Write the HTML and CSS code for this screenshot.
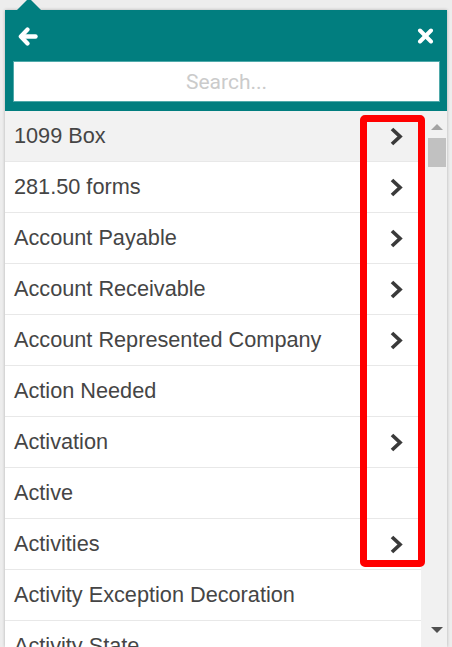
FILE: index.html
```html
<!DOCTYPE html>
<html>
<head>
<meta charset="utf-8">
<link rel="stylesheet" href="styles.css">
</head>
<body>
<div class="popup">
  <div class="header">
    <div class="icon-row">
      <svg class="icon-back" width="20" height="19" viewBox="0 0 20 19">
        <polyline points="9.5,2.5 2.8,9.5 9.5,16.5" fill="none" stroke="#fff" stroke-width="4.2" stroke-linecap="round" stroke-linejoin="round"/>
        <line x1="4" y1="9.5" x2="17.5" y2="9.5" stroke="#fff" stroke-width="4.4" stroke-linecap="round"/>
      </svg>
      <svg class="icon-close" width="17" height="16" viewBox="0 0 17 16">
        <line x1="3" y1="2.5" x2="14" y2="13.5" stroke="#fff" stroke-width="4" stroke-linecap="round"/>
        <line x1="14" y1="2.5" x2="3" y2="13.5" stroke="#fff" stroke-width="4" stroke-linecap="round"/>
      </svg>
    </div>
    <input class="search" type="text" placeholder="Search...">
  </div>
  <div class="body">
    <ul class="list">
      <li class="row hover"><span>1099 Box</span><svg class="chev" width="15" height="19" viewBox="0 0 15 19"><polyline points="3,2 11,9.5 3,17" fill="none" stroke="#3a3a3a" stroke-width="3.7" stroke-linejoin="miter"/></svg></li>
      <li class="row"><span>281.50 forms</span><svg class="chev" width="15" height="19" viewBox="0 0 15 19"><polyline points="3,2 11,9.5 3,17" fill="none" stroke="#3a3a3a" stroke-width="3.7" stroke-linejoin="miter"/></svg></li>
      <li class="row"><span>Account Payable</span><svg class="chev" width="15" height="19" viewBox="0 0 15 19"><polyline points="3,2 11,9.5 3,17" fill="none" stroke="#3a3a3a" stroke-width="3.7" stroke-linejoin="miter"/></svg></li>
      <li class="row"><span>Account Receivable</span><svg class="chev" width="15" height="19" viewBox="0 0 15 19"><polyline points="3,2 11,9.5 3,17" fill="none" stroke="#3a3a3a" stroke-width="3.7" stroke-linejoin="miter"/></svg></li>
      <li class="row"><span>Account Represented Company</span><svg class="chev" width="15" height="19" viewBox="0 0 15 19"><polyline points="3,2 11,9.5 3,17" fill="none" stroke="#3a3a3a" stroke-width="3.7" stroke-linejoin="miter"/></svg></li>
      <li class="row"><span>Action Needed</span></li>
      <li class="row"><span>Activation</span><svg class="chev" width="15" height="19" viewBox="0 0 15 19"><polyline points="3,2 11,9.5 3,17" fill="none" stroke="#3a3a3a" stroke-width="3.7" stroke-linejoin="miter"/></svg></li>
      <li class="row"><span>Active</span></li>
      <li class="row"><span>Activities</span><svg class="chev" width="15" height="19" viewBox="0 0 15 19"><polyline points="3,2 11,9.5 3,17" fill="none" stroke="#3a3a3a" stroke-width="3.7" stroke-linejoin="miter"/></svg></li>
      <li class="row"><span>Activity Exception Decoration</span></li>
      <li class="row"><span>Activity State</span></li>
    </ul>
    <div class="scrollbar">
      <div class="sb-btn up"><span class="tri-up"></span></div>
      <div class="sb-thumb"></div>
      <div class="sb-space"></div>
      <div class="sb-btn down"><span class="tri-down"></span></div>
    </div>
  </div>
  <div class="highlight"></div>
</div>
</body>
</html>
```

FILE: styles.css
```css
html, body {
  margin: 0;
  padding: 0;
  height: 647px;
  overflow: hidden;
}
body {
  background: #ededed;
  font-family: "Liberation Sans", Arial, sans-serif;
  padding-top: 10px;
  box-sizing: border-box;
}
.popup {
  position: relative;
  margin-left: 5px;
  width: 442px;
  height: 637px;
  background: #fff;
  box-shadow: 0 0 3px rgba(0, 0, 0, 0.25);
  display: flex;
  flex-direction: column;
}
.popup::before {
  content: "";
  position: absolute;
  left: 12px;
  top: -12px;
  width: 0;
  height: 0;
  border-left: 12px solid transparent;
  border-right: 12px solid transparent;
  border-bottom: 12px solid #017e7f;
}
.header {
  background: #017e7f;
  padding: 16px 7px 9px 8px;
  display: flex;
  flex-direction: column;
  gap: 15px;
}
.icon-row {
  height: 20px;
  display: flex;
  align-items: center;
  justify-content: space-between;
  padding: 0 6px 0 5px;
}
.icon-back { display: block; }
.icon-close { display: block; }
.search {
  height: 41px;
  box-sizing: border-box;
  border: 1px solid #4fa9aa;
  background: #fff;
  margin: 0;
  padding: 0;
  font-family: Roboto, "Liberation Sans", sans-serif;
  font-size: 21px;
  text-align: center;
  outline: none;
}
.search::placeholder {
  color: #cbcbcb;
}
.body {
  flex: 1;
  display: flex;
  min-height: 0;
  overflow: hidden;
}
.list {
  list-style: none;
  margin: 0;
  padding: 0;
  flex: 1;
}
.row {
  height: 50px;
  border-bottom: 1px solid #e8e8e8;
  display: flex;
  align-items: center;
  justify-content: space-between;
  padding: 0 17px 0 9px;
  font-size: 21.7px;
  color: #454545;
  white-space: nowrap;
}
.row.hover {
  background: #f2f2f2;
}
.chev { display: block; }
.scrollbar {
  width: 26px;
  background: #f1f1f1;
  display: flex;
  flex-direction: column;
  align-items: center;
  padding-left: 7px;
  padding-right: 1px;
  box-sizing: border-box;
}
.sb-btn {
  height: 27px;
  width: 100%;
  display: flex;
  justify-content: center;
  align-items: flex-start;
}
.sb-btn.down { height: 20px; }
.tri-up {
  margin-top: 13px;
  width: 0;
  height: 0;
  border-left: 6px solid transparent;
  border-right: 6px solid transparent;
  border-bottom: 6px solid #a3a3a3;
}
.tri-down {
  width: 0;
  height: 0;
  border-left: 6px solid transparent;
  border-right: 6px solid transparent;
  border-top: 6px solid #505050;
}
.sb-thumb {
  width: 100%;
  height: 29px;
  background: #c1c1c1;
}
.sb-space {
  flex: 1;
}
.highlight {
  position: absolute;
  left: 355px;
  top: 105px;
  width: 65px;
  height: 452px;
  box-sizing: border-box;
  border: 7px solid #ff0000;
  border-radius: 5px;
  pointer-events: none;
}
```
